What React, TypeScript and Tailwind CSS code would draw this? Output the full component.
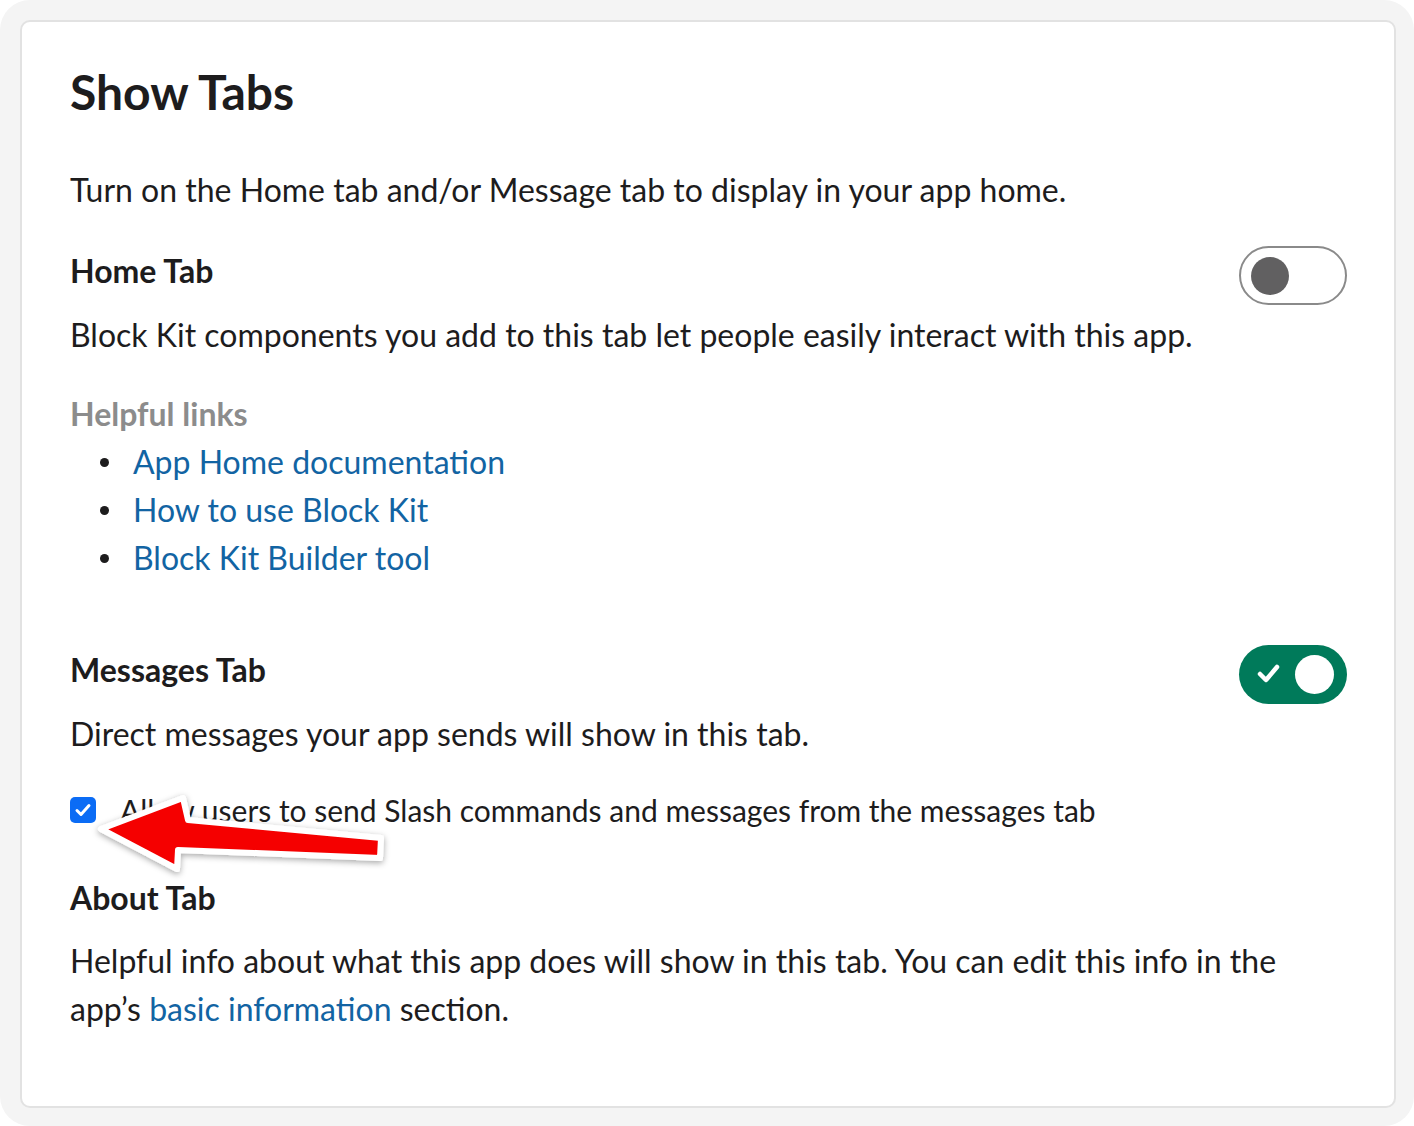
import React from "react";

function Toggle({ on }: { on: boolean }) {
  if (on) {
    return (
      <div className="relative -mt-[1px] -mb-[10px] flex h-[59px] w-[108px] shrink-0 items-center rounded-full bg-[#007a5a]">
        <svg className="absolute left-[17px] top-[17px]" width="26" height="22" viewBox="0 0 26 22">
          <path d="M4 12 L10 18 L21 5" fill="none" stroke="#ffffff" strokeWidth="4.5" strokeLinecap="round" strokeLinejoin="round" />
        </svg>
        <div className="absolute right-[13px] top-[10px] h-[39px] w-[39px] rounded-full bg-white" />
      </div>
    );
  }
  return (
    <div className="relative -mt-[1px] -mb-[10px] h-[59px] w-[108px] shrink-0 rounded-full border-2 border-[#8a8a8a] bg-white">
      <div className="absolute left-[10px] top-[9px] h-[38px] w-[38px] rounded-full bg-[#616061]" />
    </div>
  );
}

export default function App() {
  return (
    <div className="min-h-[1126px] w-[1414px] bg-white">
      <div
        className="min-h-[1126px] w-[1414px] rounded-[30px] bg-[#f4f4f4] pt-[20px] pl-[20px] pr-[18px] pb-[18px]"
        style={{ fontFamily: "Lato, 'Noto Sans', sans-serif" }}
      >
        <div className="relative rounded-[10px] border-2 border-[#e2e2e2] bg-white pl-[48px] pr-[47px] pt-[42px] pb-[73px] text-[#1d1c1d]">
          <h1 className="text-[48px] font-bold leading-[56px]">Show Tabs</h1>
          <p className="mt-[46px] text-[32px] leading-[48px]">
            Turn on the Home tab and/or Message tab to display in your app home.
          </p>

          <div className="mt-[33px] flex items-start justify-between">
            <h2 className="text-[32px] font-bold leading-[48px]">Home Tab</h2>
            <Toggle on={false} />
          </div>
          <p className="mt-[16px] text-[32px] leading-[48px]">
            Block Kit components you add to this tab let people easily interact with this app.
          </p>

          <p className="mt-[31px] text-[32px] font-bold leading-[48px] text-[#8c8c8c]">Helpful links</p>
          <ul className="text-[32px] leading-[48px]">
            {["App Home documentation", "How to use Block Kit", "Block Kit Builder tool"].map((t) => (
              <li key={t} className="flex items-center">
                <span className="ml-[30px] mr-[24px] inline-block h-[9px] w-[9px] rounded-full bg-[#1d1c1d]" />
                <a className="text-[#1264a3]">{t}</a>
              </li>
            ))}
          </ul>

          <div className="mt-[64px] flex items-start justify-between">
            <h2 className="text-[32px] font-bold leading-[48px]">Messages Tab</h2>
            <Toggle on={true} />
          </div>
          <p className="mt-[16px] text-[32px] leading-[48px]">
            Direct messages your app sends will show in this tab.
          </p>

          <div className="relative mt-[28px] flex items-center">
            <div className="flex h-[26px] w-[26px] items-center justify-center rounded-[5px] bg-[#0b6cf5]">
              <svg width="18" height="16" viewBox="0 0 18 16">
                <path d="M3 8.5 L7 12.5 L15 3.5" fill="none" stroke="#ffffff" strokeWidth="3" strokeLinecap="round" strokeLinejoin="round" />
              </svg>
            </div>
            <span className="ml-[24px] text-[30px] leading-[48px]">
              Allow users to send Slash commands and messages from the messages tab
            </span>
          </div>

          <h2 className="mt-[40px] text-[32px] font-bold leading-[48px]">About Tab</h2>
          <p className="mt-[15px] text-[32px] leading-[48px]">
            Helpful info about what this app does will show in this tab. You can edit this info in the app’s{" "}
            <a className="text-[#1264a3]">basic information</a> section.
          </p>

          <svg
            className="pointer-events-none absolute left-[38px] top-[758px]"
            width="360"
            height="120"
            viewBox="60 780 360 120"
            style={{ overflow: "visible" }}
          >
            <defs>
              <filter id="sh" x="-20%" y="-50%" width="140%" height="200%">
                <feDropShadow dx="0" dy="2" stdDeviation="3" floodColor="#000000" floodOpacity="0.35" />
              </filter>
            </defs>
            <polygon
              points="101,829 183,798 188,820 381,838 380,858 178,850 177,869"
              fill="#f50000"
              stroke="#ffffff"
              strokeWidth="6"
              strokeLinejoin="round"
              filter="url(#sh)"
            />
          </svg>
        </div>
      </div>
    </div>
  );
}
